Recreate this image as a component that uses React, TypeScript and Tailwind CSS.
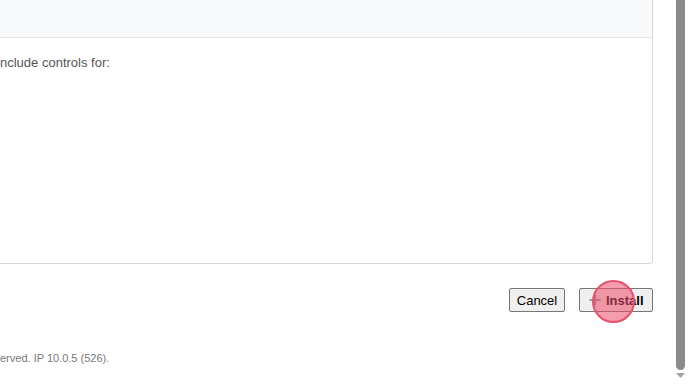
import React from 'react';

function PlusIcon() {
  return (
    <svg className="w-[12px] h-[12px]" viewBox="0 0 12 12" fill="none">
      <path d="M6 1.5v9M1.5 6h9" stroke="#9a9a9a" strokeWidth={2.2} strokeLinecap="square" />
    </svg>
  );
}

export default function App() {
  return (
    <div
      className="w-[688px] h-[385px] flex overflow-hidden bg-white text-[#555]"
      style={{ fontFamily: '"Liberation Sans", Arial, sans-serif' }}
    >
      <div className="w-[676px] flex flex-col">
        {/* panel */}
        <div className="ml-[-20px] mr-[23px] h-[264px] flex flex-col border-r border-b border-[#d6d6d6] rounded-br-[4px] bg-white">
          <div className="h-[38px] shrink-0 bg-[#f8f9fb] border-b border-[#e2e4e7]" />
          <div className="flex-1 pl-[20px] pt-[17px]">
            <p className="text-[13px] leading-[16px] text-[#555]">nclude controls for:</p>
          </div>
        </div>

        {/* actions */}
        <div className="mt-[24px] mr-[23px] flex justify-end gap-[14px]">
          <button
            type="button"
            className="h-[24px] w-[56px] border border-[#767676] rounded-[2px] bg-[#efefef] text-[13px] text-black leading-none"
          >
            Cancel
          </button>
          <div className="relative">
            <button
              type="button"
              className="h-[24px] w-[74px] flex items-center gap-[5px] pl-[9px] border border-[#767676] rounded-[2px] bg-[#efefef] text-[13px] font-bold text-black leading-none"
            >
              <PlusIcon />
              Install
            </button>
            {/* click indicator */}
            <div className="absolute left-[13px] top-[-8px] w-[43px] h-[43px] rounded-full border-2 border-[#e8506b] bg-[rgba(236,76,104,0.55)] pointer-events-none" />
          </div>
        </div>

        <p className="mt-[40px] text-[11px] leading-[13px] text-[#777]">erved. IP 10.0.5 (526).</p>
      </div>

      {/* scrollbar */}
      <div className="w-[12px] flex flex-col">
        <div className="w-[9px] h-[370px] bg-[#8b8b8b] rounded-b-full" />
        <svg className="mt-[3px] w-[9px] h-[6px]" viewBox="0 0 9 6">
          <path d="M0 0h9L4.5 5z" fill="#a3a3a3" />
        </svg>
      </div>
    </div>
  );
}
